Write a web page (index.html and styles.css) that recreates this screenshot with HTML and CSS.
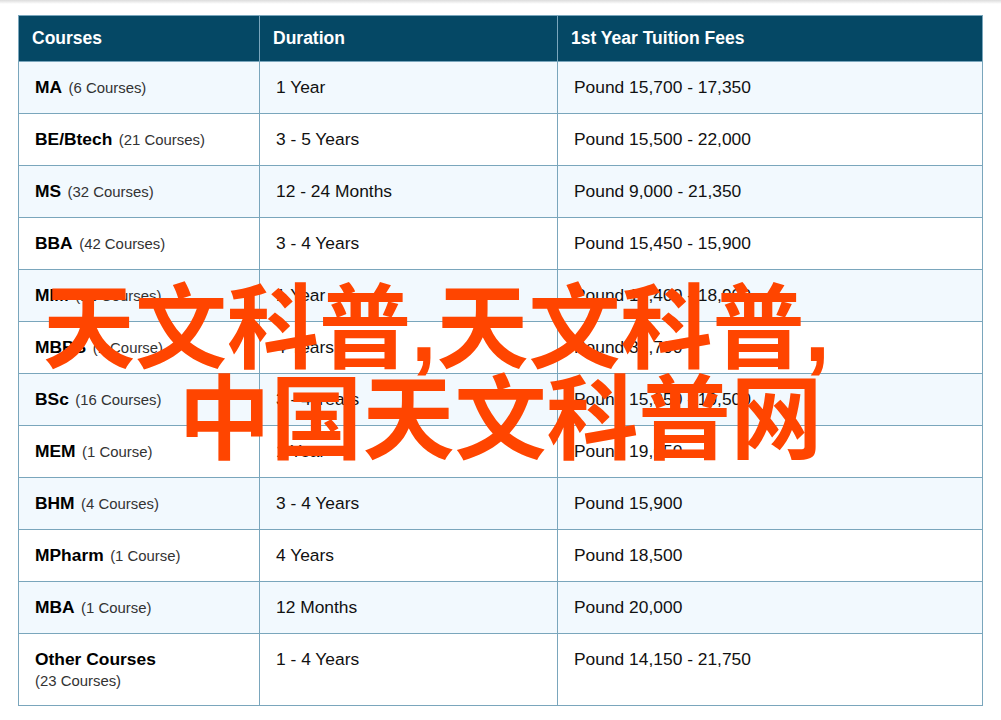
FILE: index.html
```html
<!DOCTYPE html>
<html lang="zh">
<head>
<meta charset="utf-8">
<title>天文科普</title>
<link rel="stylesheet" href="styles.css">
</head>
<body>
<div class="shade"></div>
<table class="fees">
<colgroup><col class="c1"><col class="c2"><col class="c3"></colgroup>
<thead>
<tr><th>Courses</th><th>Duration</th><th>1st Year Tuition Fees</th></tr>
</thead>
<tbody>
<tr><td><b>MA</b><span class="n">(6 Courses)</span></td><td>1 Year</td><td>Pound 15,700 - 17,350</td></tr>
<tr><td><b>BE/Btech</b><span class="n">(21 Courses)</span></td><td>3 - 5 Years</td><td>Pound 15,500 - 22,000</td></tr>
<tr><td><b>MS</b><span class="n">(32 Courses)</span></td><td>12 - 24 Months</td><td>Pound 9,000 - 21,350</td></tr>
<tr><td><b>BBA</b><span class="n">(42 Courses)</span></td><td>3 - 4 Years</td><td>Pound 15,450 - 15,900</td></tr>
<tr><td><b>MIM</b><span class="n">(12 Courses)</span></td><td>1 Year</td><td>Pound 17,400 - 18,900</td></tr>
<tr><td><b>MBBS</b><span class="n">(1 Course)</span></td><td>4 Years</td><td>Pound 31,700</td></tr>
<tr><td><b>BSc</b><span class="n">(16 Courses)</span></td><td>3 - 4 Years</td><td>Pound 15,350 - 19,500</td></tr>
<tr><td><b>MEM</b><span class="n">(1 Course)</span></td><td>1 Year</td><td>Pound 19,650</td></tr>
<tr><td><b>BHM</b><span class="n">(4 Courses)</span></td><td>3 - 4 Years</td><td>Pound 15,900</td></tr>
<tr><td><b>MPharm</b><span class="n">(1 Course)</span></td><td>4 Years</td><td>Pound 18,500</td></tr>
<tr><td><b>MBA</b><span class="n">(1 Course)</span></td><td>12 Months</td><td>Pound 20,000</td></tr>
<tr class="tall"><td><b>Other Courses</b><span class="n block">(23 Courses)</span></td><td>1 - 4 Years</td><td>Pound 14,150 - 21,750</td></tr>
</tbody>
</table>
<h1 class="banner"><span class="line first">天文科普,天文科普,</span><span class="line">中国天文科普网</span></h1>
</body>
</html>
```
FILE: styles.css
```css
html, body { margin: 0; padding: 0; background: #fff; }
body {
  width: 1001px;
  height: 720px;
  overflow: hidden;
  position: relative;
  font-family: "Liberation Sans", Arial, sans-serif;
  color: #111;
}
.shade {
  height: 4px;
  margin-bottom: 11px;
  background: linear-gradient(#dcdcdc, #fff);
}
.fees {
  margin-left: 18px;
  width: 965px;
  table-layout: fixed;
  border-collapse: collapse;
  font-size: 17.4px;
}
.c1 { width: 241px; }
.c2 { width: 298px; }
.fees th, .fees td {
  border: 1px solid #7aa6bc;
  text-align: left;
}
.fees th {
  background: #054865;
  color: #fff;
  height: 45px;
  padding: 0 13px;
  font-size: 17.5px;
}
.fees td {
  height: 51px;
  padding: 0 16px;
  vertical-align: middle;
}
.fees td:first-child { color: #000; }
.fees tbody tr:nth-child(odd) td { background: #f2f9fe; }
.fees tr.tall td { height: 56px; vertical-align: top; padding-top: 15px; }
.fees b { color: #000; }
.n {
  margin-left: 6.5px;
  font-size: 14.9px;
  color: #333;
}
.n.block { display: block; margin: 3px 0 0; }
.banner {
  position: absolute;
  left: 0;
  top: 284px;
  width: 1001px;
  margin: 0;
  text-align: center;
  font-family: "Liberation Sans", "Noto Sans CJK SC", sans-serif;
  font-size: 92px;
  line-height: 91px;
  font-weight: 700;
  color: #ff4500;
  white-space: nowrap;
}
.line { display: block; }
.line.first { padding-right: 128px; }
```
